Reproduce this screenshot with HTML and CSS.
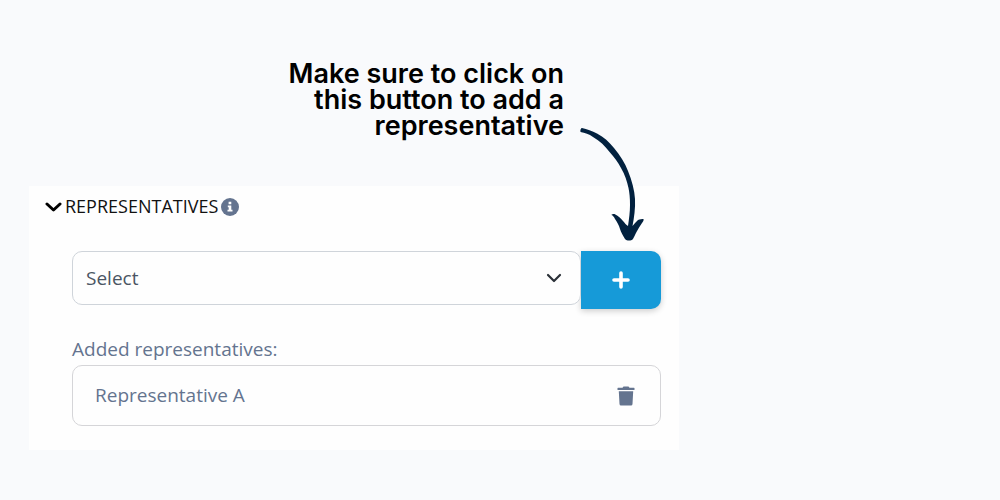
FILE: index.html
```
<!DOCTYPE html>
<html lang="en">
<head>
    <meta charset="UTF-8">
    <meta name="viewport" content="width=device-width, initial-scale=1.0">
    <title>Representatives</title>
    <link rel="stylesheet" href="styles.css">
</head>
<body>
    <main class="page">
        <p class="hint">Make sure to click on<br>this button to add a<br>representative</p>
        <section class="card">
            <svg class="arrow" width="66" height="116" viewBox="0 0 66 116" aria-hidden="true">
                <path fill="#02213f" d="M2 0C7 1 12 3 17 5.500C24 9 29 14 34 20C40 27 45 35 48 43C52 53 54.500 62 55 71C55.500 80 54 90 52.500 98C54 96 56 94 58 92C60 91 62 91 63.500 91C64 92 63 94 62 95C60 98 58 101 56.500 104C55 107 54 109 53 111C51 113 47 113 45 111C43 108 41 104 40 101C39 97 37 94 35 91C34 89 33 87.500 31.500 87C31.500 86 33 86 34.500 86C39 88 41 91 43 93C45 95 46 97 48 98C49 91 50 84 50 77C50 70 49.500 65 48.500 60C47 53 45 47 41 40C38 34 34 29 30 24.500C25 18 20 13 13 9C9 6 5 5 0.500 4C0 2 1 0 2 0Z"/>
            </svg>
            <h1 class="title">
                <svg width="17" height="10" viewBox="0 0 17 10" aria-hidden="true">
                    <path d="M2 2L8.500 8L15 2" fill="none" stroke="#000" stroke-width="3" stroke-linecap="round" stroke-linejoin="round"/>
                </svg>
                <span>REPRESENTATIVES</span>
                <svg width="18" height="18" viewBox="0 0 18 18" aria-hidden="true">
                    <circle cx="9" cy="9" r="9" fill="#64748f"/>
                    <path fill="#fff" d="M7.600 3.800h2.700v2.500H7.600zM6.800 7.400h3.500v4.300h1.200v1.900H6.500v-1.900h1.200V9.200h-.9z"/>
                </svg>
            </h1>
            <div class="content">
                <div class="picker">
                    <div class="select-wrap">
                        <select class="select" aria-label="Representative">
                            <option>Select</option>
                        </select>
                        <svg class="caret" width="16" height="10" viewBox="0 0 16 10" aria-hidden="true">
                            <path d="M2 2L8 8L14 2" fill="none" stroke="#2b3138" stroke-width="2.200" stroke-linecap="round" stroke-linejoin="round"/>
                        </svg>
                    </div>
                    <button class="add" type="button" aria-label="Add representative">
                        <svg width="18" height="18" viewBox="0 0 18 18" aria-hidden="true">
                            <path d="M9 2V16M2 9H16" stroke="#fff" stroke-width="3.600" stroke-linecap="round"/>
                        </svg>
                    </button>
                </div>
                <h2 class="label">Added representatives:</h2>
                <div class="item">
                    <span>Representative A</span>
                    <button class="remove" type="button" aria-label="Remove Representative A">
                        <svg width="18" height="20" viewBox="0 0 18 20" aria-hidden="true">
                            <path fill="#64748f" d="M1 1.800H5.500L6.500.5H11.500L12.500 1.800H17Q17.500 1.800 17.500 2.300V4H.5V2.300Q.5 1.800 1 1.800ZM1.800 5.300H16.200L15.500 18Q15.400 19.500 14 19.500H4Q2.600 19.500 2.500 18Z"/>
                        </svg>
                    </button>
                </div>
            </div>
        </section>
    </main>
</body>
</html>
```
FILE: styles.css
```
*{
    margin: 0;
    padding: 0;
    box-sizing: border-box;
}
body{
    min-height: 100vh;
    background-color: #f9fafc;
    font-family: "Open Sans", "Noto Sans", sans-serif;
    font-size: 19px;
}
.page {
    width: 65%;
    min-width: 480px;
    margin-left: 29px;
    padding-top: 61px;
}
.hint {
    padding-right: 115px;
    margin-bottom: 47px;
    font-family: Inter, sans-serif;
    font-size: 27px;
    font-weight: 600;
    line-height: 26px;
    text-align: right;
    color: #000;
}
.card {
    position: relative;
    padding: 8px 18px 24px 16px;
    background-color: #fefefe;
}
/* points from the hint to the add button */
.arrow {
    position: absolute;
    top: -58px;
    right: 33px;
}
.title {
    display: flex;
    align-items: center;
    gap: 3px;
    font-size: 18px;
    font-weight: 400;
    line-height: 25px;
    color: #111;
}
.content {
    padding: 32px 0 0 27px;
}
.picker {
    display: flex;
    align-items: flex-start;
}
.select-wrap {
    position: relative;
    flex: 1;
}
.select {
    display: block;
    width: 100%;
    height: 54px;
    padding: 0 40px 0 13px;
    border: 1px solid #cfd4da;
    border-radius: 10px;
    appearance: none;
    background-color: #fefefe;
    font-family: inherit;
    font-size: 19px;
    color: #4b5563;
}
.caret {
    position: absolute;
    top: 22px;
    right: 19px;
    pointer-events: none;
}
.add {
    display: flex;
    align-items: center;
    justify-content: center;
    width: 80px;
    height: 58px;
    border: 0;
    border-radius: 0 10px 10px 0;
    background-color: #169ad8;
    box-shadow: 0 2px 6px rgba(0, 0, 0, 0.2);
    cursor: pointer;
}
.label {
    margin-top: 27px;
    font-size: 19px;
    font-weight: 400;
    line-height: 26px;
    color: #64748f;
}
.item {
    display: flex;
    align-items: center;
    justify-content: space-between;
    margin-top: 3px;
    padding: 16px 25px 16px 22px;
    border: 1px solid #d5d5d8;
    border-radius: 10px;
    line-height: 27px;
    color: #64748f;
}
.remove {
    display: flex;
    border: 0;
    background: none;
    cursor: pointer;
}
```
